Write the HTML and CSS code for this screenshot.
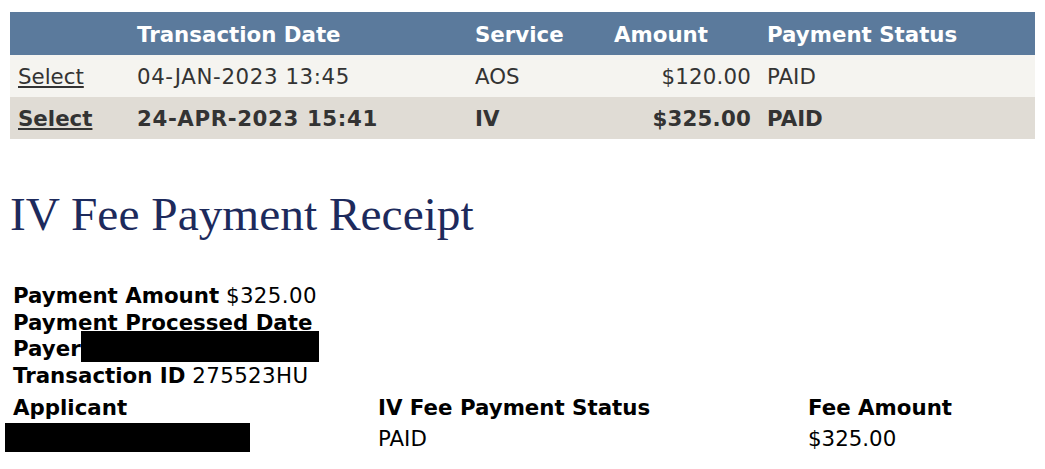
FILE: index.html
```html
<!DOCTYPE html>
<html lang="en">
<head>
<meta charset="utf-8">
<title>IV Fee Payment Receipt</title>
<link rel="stylesheet" href="styles.css">
</head>
<body>
<div class="page">
  <table class="txn">
    <colgroup>
      <col class="c1"><col class="c2"><col class="c3"><col class="c4"><col class="c5">
    </colgroup>
    <thead>
      <tr><th></th><th>Transaction Date</th><th>Service</th><th>Amount</th><th>Payment Status</th></tr>
    </thead>
    <tbody>
      <tr class="row-odd">
        <td><a href="#" class="sel-link">Select</a></td>
        <td class="date">04-JAN-2023 13:45</td>
        <td>AOS</td>
        <td class="num">$120.00</td>
        <td>PAID</td>
      </tr>
      <tr class="row-selected">
        <td><a href="#" class="sel-link">Select</a></td>
        <td class="date">24-APR-2023 15:41</td>
        <td>IV</td>
        <td class="num">$325.00</td>
        <td>PAID</td>
      </tr>
    </tbody>
  </table>

  <h1 class="title">IV Fee Payment Receipt</h1>

  <div class="details">
    <div class="line"><b>Payment Amount</b> <span class="val">$325.00</span></div>
    <div class="line"><b>Payment Processed Date</b></div>
    <div class="line"><b>Payer</b><span class="redact-inline"></span></div>
    <div class="line"><b>Transaction ID</b> <span class="val">275523HU</span></div>
  </div>

  <div class="summary">
    <div class="label">Applicant</div>
    <div class="label">IV Fee Payment Status</div>
    <div class="label">Fee Amount</div>
    <div class="value"><div class="redact-block"></div></div>
    <div class="value">PAID</div>
    <div class="value">$325.00</div>
  </div>
</div>
</body>
</html>
```

FILE: styles.css
```css
html, body {
  margin: 0;
  padding: 0;
  background: #ffffff;
}

.page {
  padding: 12px 10px 0 10px;
  font-family: "DejaVu Sans", Verdana, sans-serif;
  font-size: 21.33px;
}

.txn {
  width: 1025px;
  border-collapse: collapse;
  table-layout: fixed;
  color: #333333;
}

.c1 { width: 119px; }
.c2 { width: 338px; }
.c3 { width: 139px; }
.c4 { width: 153px; }
.c5 { width: 276px; }

.txn th {
  background: #5b7a9c;
  color: #ffffff;
  font-weight: bold;
  text-align: left;
  padding: 10px 8px 8px 8px;
  line-height: 25px;
}

.txn td {
  padding: 9px 8px 7px 8px;
  line-height: 26px;
  white-space: nowrap;
}

.txn td.date {
  letter-spacing: 0.6px;
}

.txn td.num {
  text-align: right;
  letter-spacing: 0.2px;
}

.row-odd td {
  background: #f5f4f0;
}

.row-selected td {
  background: #e0dcd5;
  font-weight: bold;
}

.sel-link {
  color: #333333;
  text-decoration: underline;
}

.title {
  margin: 48px 0 0 0;
  font-family: "Liberation Serif", "Times New Roman", serif;
  font-size: 47.4px;
  font-weight: normal;
  line-height: normal;
  color: #1d2a5c;
}

.details {
  margin-top: 42px;
  padding-left: 3px;
  color: #000000;
}

.line {
  line-height: 26.7px;
  white-space: nowrap;
}

.val {
  letter-spacing: 0.4px;
}

.redact-inline {
  background: #000000;
  padding: 5px 0 1px 238px;
}

.summary {
  margin-top: 5px;
  padding-left: 3px;
  display: grid;
  grid-template-columns: 365px 430px 1fr;
  color: #000000;
  line-height: 26.7px;
}

.label {
  font-weight: bold;
}

.value {
  padding-top: 4px;
}

.redact-block {
  margin: -3px 0 0 -8px;
  width: 245px;
  height: 29px;
  background: #000000;
}
```
